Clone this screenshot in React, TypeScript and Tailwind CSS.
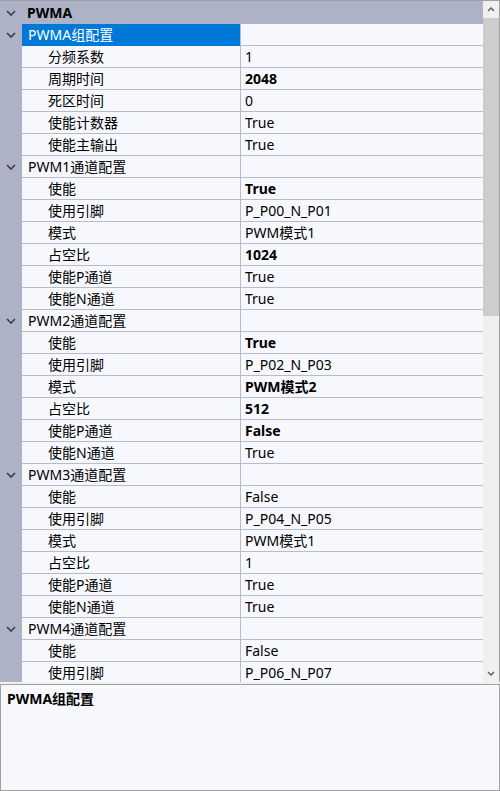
import React from "react";

type Item = { label: string; value: string; bold?: boolean };
type Group = { title: string; items: Item[]; selected?: boolean };

const groups: Group[] = [
  {
    title: "PWMA组配置",
    selected: true,
    items: [
      { label: "分频系数", value: "1" },
      { label: "周期时间", value: "2048", bold: true },
      { label: "死区时间", value: "0" },
      { label: "使能计数器", value: "True" },
      { label: "使能主输出", value: "True" },
    ],
  },
  {
    title: "PWM1通道配置",
    items: [
      { label: "使能", value: "True", bold: true },
      { label: "使用引脚", value: "P_P00_N_P01" },
      { label: "模式", value: "PWM模式1" },
      { label: "占空比", value: "1024", bold: true },
      { label: "使能P通道", value: "True" },
      { label: "使能N通道", value: "True" },
    ],
  },
  {
    title: "PWM2通道配置",
    items: [
      { label: "使能", value: "True", bold: true },
      { label: "使用引脚", value: "P_P02_N_P03" },
      { label: "模式", value: "PWM模式2", bold: true },
      { label: "占空比", value: "512", bold: true },
      { label: "使能P通道", value: "False", bold: true },
      { label: "使能N通道", value: "True" },
    ],
  },
  {
    title: "PWM3通道配置",
    items: [
      { label: "使能", value: "False" },
      { label: "使用引脚", value: "P_P04_N_P05" },
      { label: "模式", value: "PWM模式1" },
      { label: "占空比", value: "1" },
      { label: "使能P通道", value: "True" },
      { label: "使能N通道", value: "True" },
    ],
  },
  {
    title: "PWM4通道配置",
    items: [
      { label: "使能", value: "False" },
      { label: "使用引脚", value: "P_P06_N_P07" },
    ],
  },
];

const Chevron = () => (
  <svg width="10" height="6" viewBox="0 0 10 6" className="block">
    <path d="M1 1 L5 5 L9 1" fill="none" stroke="#3c3c46" strokeWidth="1.6" />
  </svg>
);

const GroupRow = ({ g }: { g: Group }) => (
  <div className="flex h-[22px] shrink-0">
    <div className="w-[22px] shrink-0 bg-[#aeb2c7] flex items-center justify-center">
      <Chevron />
    </div>
    <div
      className={
        g.selected
          ? "w-[218px] shrink-0 bg-[#0078d7] text-white pl-[6px] flex items-center border-b border-[#0078d7]"
          : "w-[218px] shrink-0 text-black pl-[6px] flex items-center border-b border-[#b8bbcb]"
      }
    >
      {g.title}
    </div>
    <div className="flex-1 border-l border-b border-[#b8bbcb]" />
  </div>
);

const ItemRow = ({ it }: { it: Item }) => (
  <div className="flex h-[22px] shrink-0">
    <div className="w-[22px] shrink-0 bg-[#aeb2c7]" />
    <div className="w-[218px] shrink-0 pl-[26px] flex items-center border-b border-[#b8bbcb] whitespace-nowrap">
      {it.label}
    </div>
    <div
      className={
        "flex-1 pl-[4px] flex items-center border-l border-b border-[#b8bbcb] whitespace-nowrap overflow-hidden " +
        (it.bold ? "font-bold" : "")
      }
    >
      {it.value}
    </div>
  </div>
);

export default function App() {
  return (
    <div
      className="w-[500px] h-[791px] flex flex-col bg-[#f0f0f0] text-[14px] text-black overflow-hidden"
      style={{ fontFamily: '"Noto Sans", "Noto Sans CJK SC", sans-serif' }}
    >
      <div className="h-[682px] shrink-0 flex border-t border-[#a0a0a0] border-r bg-[#f7f8fd] overflow-hidden">
        <div className="flex-1 flex flex-col overflow-hidden">
          <div className="h-[23px] shrink-0 bg-[#aeb2c7] flex items-center">
            <div className="w-[22px] flex items-center justify-center">
              <Chevron />
            </div>
            <span className="pl-[5px] font-bold">PWMA</span>
          </div>
          {groups.map((g) => (
            <React.Fragment key={g.title}>
              <GroupRow g={g} />
              {g.items.map((it) => (
                <ItemRow key={g.title + it.label} it={it} />
              ))}
            </React.Fragment>
          ))}
        </div>
        <div className="w-[16px] shrink-0 bg-[#f0f0f0] flex flex-col">
          <div className="h-[17px] shrink-0 flex items-center justify-center">
            <svg width="8" height="5" viewBox="0 0 8 5">
              <path d="M1 4 L4 1 L7 4" fill="none" stroke="#606060" strokeWidth="1.5" />
            </svg>
          </div>
          <div className="h-[298px] shrink-0 bg-[#cdcdcd]" />
          <div className="flex-1" />
          <div className="h-[17px] shrink-0 flex items-center justify-center">
            <svg width="8" height="5" viewBox="0 0 8 5">
              <path d="M1 1 L4 4 L7 1" fill="none" stroke="#606060" strokeWidth="1.5" />
            </svg>
          </div>
        </div>
      </div>
      <div className="mt-[2px] flex-1 border border-[#a0a0a0] bg-[#f7f8fd] px-[6px] pt-[3px]">
        <div className="font-bold">PWMA组配置</div>
      </div>
    </div>
  );
}
